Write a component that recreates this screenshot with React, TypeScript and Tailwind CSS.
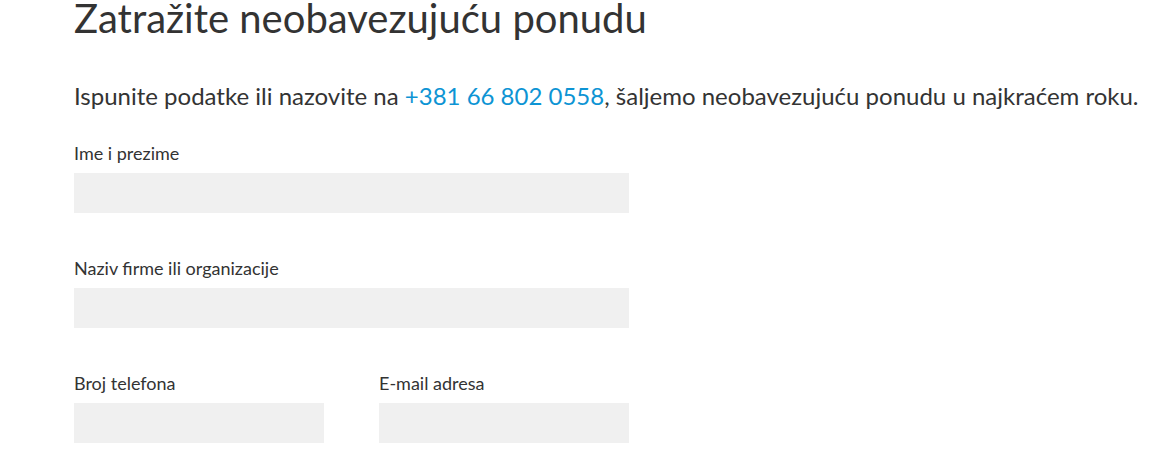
export default function App() {
  return (
    <div className="min-h-screen bg-white text-[#333333]" style={{ fontFamily: "Lato, 'Liberation Sans', sans-serif" }}>
      <div className="pl-[74px] pr-4">
        <h1 className="text-[40px] leading-[36px] font-normal text-[#333333]">Zatražite neobavezujuću ponudu</h1>
        <p className="mt-[45px] text-[24px] leading-[30px]">
          Ispunite podatke ili nazovite na <a href="#" className="text-[#0d94d4]">+381 66 802 0558</a>, šaljemo neobavezujuću ponudu u najkraćem roku.
        </p>
        <form className="mt-[30px] w-[555px] flex flex-col gap-[43px]">
          <div>
            <label className="block text-[18px] leading-[24px]">Ime i prezime</label>
            <input className="block mt-[8px] w-full h-[40px] bg-[#f0f0f0] outline-none" />
          </div>
          <div>
            <label className="block text-[18px] leading-[24px]">Naziv firme ili organizacije</label>
            <input className="block mt-[8px] w-full h-[40px] bg-[#f0f0f0] outline-none" />
          </div>
          <div className="flex gap-[55px]">
            <div className="w-[250px]">
              <label className="block text-[18px] leading-[24px]">Broj telefona</label>
              <input className="block mt-[8px] w-full h-[40px] bg-[#f0f0f0] outline-none" />
            </div>
            <div className="w-[250px]">
              <label className="block text-[18px] leading-[24px]">E-mail adresa</label>
              <input className="block mt-[8px] w-full h-[40px] bg-[#f0f0f0] outline-none" />
            </div>
          </div>
        </form>
      </div>
    </div>
  );
}
